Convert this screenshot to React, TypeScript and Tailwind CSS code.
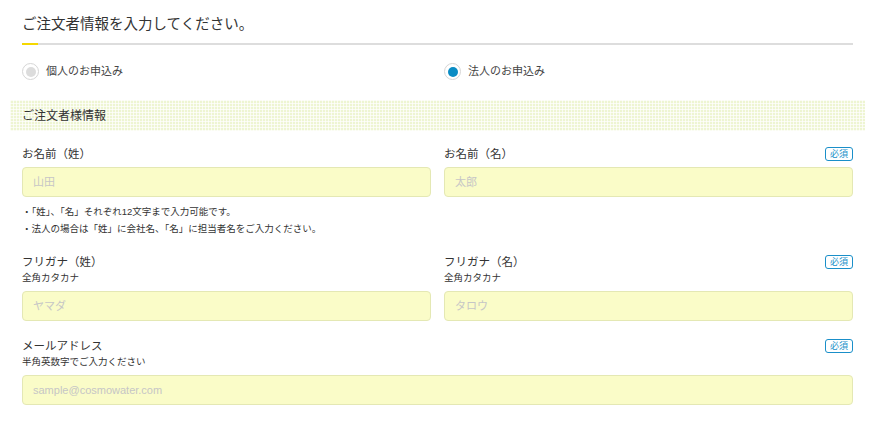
import React from 'react';

const font = { fontFamily: '"Liberation Sans", "Noto Sans CJK JP", sans-serif' };

const Required = () => (
  <span className="border border-[#1a8fc9] text-[#1a8fc9] rounded-[3px] text-[9px] leading-[10px] px-[4px] py-[1px] bg-white">必須</span>
);

const Field: React.FC<{ label: string; sub?: string; placeholder: string; required?: boolean }> = ({ label, sub, placeholder, required }) => (
  <div className="flex flex-col">
    <div className="flex justify-between items-start h-[14px]">
      <span className="text-[11.5px] leading-[14px] text-[#333]">{label}</span>
      {required && <Required />}
    </div>
    {sub && <div className="text-[9.5px] leading-[12px] text-[#333] mt-[3px]">{sub}</div>}
    <div className={`${sub ? 'mt-[7px]' : 'mt-[6px]'} h-[30px] rounded-[4px] border border-[#e4e8b4] bg-[#fafcc8] px-[10px] flex items-center text-[11px] text-[#c6c6c6]`}>
      {placeholder}
    </div>
  </div>
);

export default function App() {
  return (
    <div className="w-[882px] h-[429px] bg-white overflow-hidden" style={font}>
      <div className="px-[22px] pt-[14px] w-[875px]">
        <h1 className="text-[14.5px] leading-[20px] text-[#333]">ご注文者情報を入力してください。</h1>
        <div className="mt-[9px] h-[2px] bg-[#dddddd] flex">
          <div className="w-[16px] bg-[#f5d800]" />
        </div>
        <div className="grid grid-cols-2 gap-[13px] mt-[18px]">
          <label className="flex items-center gap-[7px]">
            <span className="w-[17px] h-[17px] rounded-full border border-[#d6d6d6] bg-white flex items-center justify-center">
              <span className="w-[10px] h-[10px] rounded-full bg-[#dcdcdc]" />
            </span>
            <span className="text-[11px] text-[#444]">個人のお申込み</span>
          </label>
          <label className="flex items-center gap-[7px]">
            <span className="w-[17px] h-[17px] rounded-full border border-[#d6d6d6] bg-white flex items-center justify-center">
              <span className="w-[10px] h-[10px] rounded-full bg-[#0a8cc4]" />
            </span>
            <span className="text-[11px] text-[#444]">法人のお申込み</span>
          </label>
        </div>
      </div>

      <div className="mx-[10px] w-[855px] mt-[20px] h-[31px] flex items-center px-[12px] bg-[#eef5d2] bg-[linear-gradient(90deg,rgba(255,255,255,0.7)_1px,transparent_1px),linear-gradient(rgba(255,255,255,0.7)_1px,transparent_1px)] bg-[length:3px_3px]">
        <span className="text-[12px] text-[#333]">ご注文者様情報</span>
      </div>

      <div className="px-[22px] pt-[16px] w-[875px]">
        <div className="grid grid-cols-2 gap-[13px]">
          <Field label="お名前（姓）" placeholder="山田" />
          <Field label="お名前（名）" placeholder="太郎" required />
        </div>
        <div className="mt-[6px] text-[9.5px] leading-[17px] text-[#333]">
          <p>・「姓」、「名」それぞれ12文字まで入力可能です。</p>
          <p>・法人の場合は「姓」に会社名、「名」に担当者名をご入力ください。</p>
        </div>
        <div className="grid grid-cols-2 gap-[13px] mt-[18px]">
          <Field label="フリガナ（姓）" sub="全角カタカナ" placeholder="ヤマダ" />
          <Field label="フリガナ（名）" sub="全角カタカナ" placeholder="タロウ" required />
        </div>
        <div className="mt-[18px]">
          <Field label="メールアドレス" sub="半角英数字でご入力ください" placeholder="sample@cosmowater.com" required />
        </div>
      </div>
    </div>
  );
}
